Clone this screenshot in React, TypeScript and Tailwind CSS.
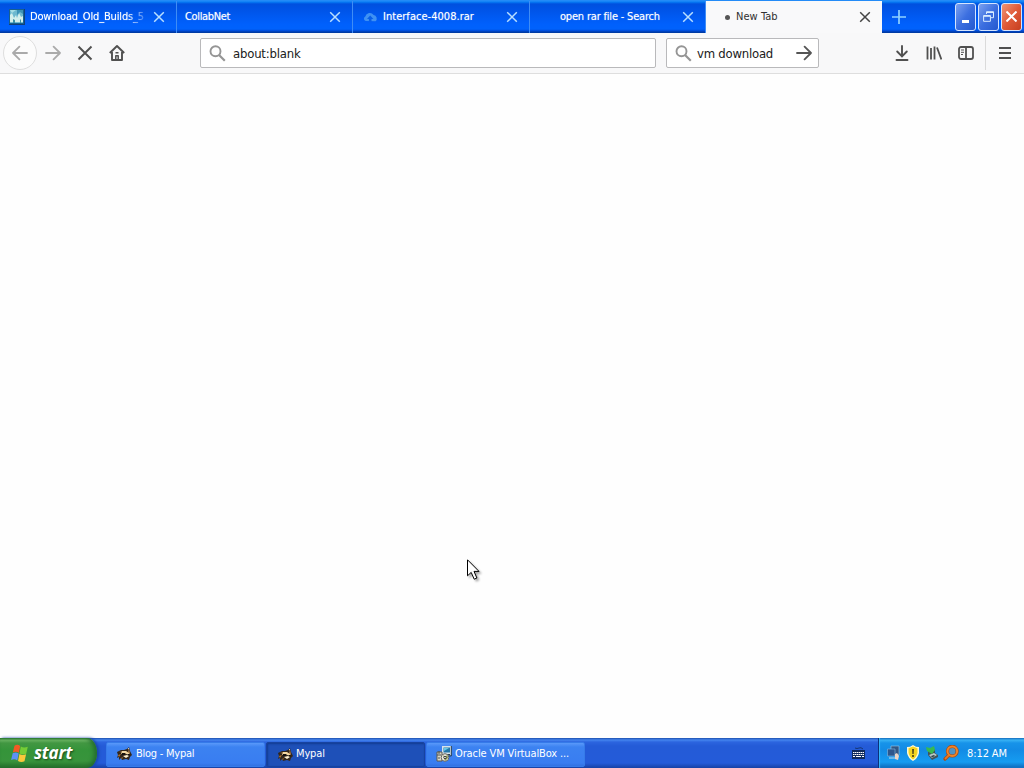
import type { ReactNode } from 'react';
import clsx from 'clsx';

interface IconProps {
  className?: string;
}

function CloseIcon({ className }: IconProps) {
  return (
    <svg className={clsx('size-3 shrink-0', className)} viewBox="0 0 12 12" fill="none" stroke="currentColor" strokeWidth="1.5">
      <path d="M1.2 1.2l9.6 9.6M10.8 1.2l-9.6 9.6" />
    </svg>
  );
}

function SearchIcon({ className }: IconProps) {
  return (
    <svg className={clsx('size-[17px] shrink-0 text-[#959595]', className)} viewBox="0 0 17 17" fill="none" stroke="currentColor">
      <circle cx="6.5" cy="6.3" r="5" strokeWidth="1.9" />
      <path d="M10 10l5.8 5.8" strokeWidth="2.2" />
    </svg>
  );
}

function ArrowIcon({ className }: IconProps) {
  return (
    <svg className={clsx('size-4 shrink-0', className)} viewBox="0 0 16 16" fill="none" stroke="currentColor" strokeWidth="1.8" strokeLinecap="round" strokeLinejoin="round">
      <path d="M1 8h14M8.6 1.6L15 8l-6.4 6.4" />
    </svg>
  );
}

function MountainIcon() {
  return (
    <svg className="size-4 shrink-0" viewBox="0 0 16 16">
      <rect width="16" height="16" fill="#17608f" />
      <path d="M1 1h13v13H1z" fill="#6db9cf" />
      <path d="M1 6l2-2 2 5 2-3 1 3 2-5 2 4 2-1v6H1z" fill="#d3efec" />
      <path d="M4 14V10l2 1v3zM11 14v-4l1 1v3z" fill="#3c91a6" />
      <path d="M1 1h6L3 4z" fill="#a5dde4" />
      <path d="M8 1h6v4l-3-2-3 3z" fill="#3c92b6" />
      <path d="M0 15h16v1H0zM15 0h1v16h-1z" fill="#103f78" />
    </svg>
  );
}

function CloudIcon() {
  return (
    <svg className="h-3 w-[15px] shrink-0" viewBox="0 0 15 12">
      <path d="M2.8 10A2.4 2.4 0 0 1 2.3 5.5 4.6 4.6 0 0 1 10.6 4a3.6 3.6 0 0 1 2 6.2z" fill="#3f91f3" />
      <path d="M7.2 4.5L10.4 8H8.5v3H5.9V8H4z" fill="#075fe9" />
    </svg>
  );
}

interface TabProps {
  title: string;
  icon?: ReactNode;
  active?: boolean;
  className?: string;
  textClassName?: string;
}

function Tab({ title, icon, active, className, textClassName }: TabProps) {
  return (
    <div
      className={clsx(
        'flex h-full shrink-0 items-center pr-[11px]',
        active ? 'bg-[#f9f9fa] text-[#303030]' : 'border-r border-[#3f8df5] text-white',
        className,
      )}
    >
      {icon}
      <span className={clsx('flex-1 overflow-hidden pt-px whitespace-nowrap', !active && '[text-shadow:0_0_1px_#fff8]', textClassName)}>
        {title}
      </span>
      <CloseIcon className={active ? 'text-[#444]' : 'text-[#b8dfff]'} />
    </div>
  );
}

function WindowButton({ children, close }: { children: ReactNode; close?: boolean }) {
  return (
    <button
      className={clsx(
        'flex h-7 w-[21px] items-center justify-center rounded-[3px] border border-[#d5e5ff]',
        close
          ? 'bg-linear-to-br from-[#ee9476] via-[#e05a38] to-[#c63f20]'
          : 'bg-linear-to-br from-[#7ba0ef] via-[#3c6fe0] to-[#2458cf]',
      )}
    >
      {children}
    </button>
  );
}

function TabBar() {
  return (
    <div className="flex h-[33px] bg-[linear-gradient(180deg,#238bf7_0,#238bf7_1px,#067cf5_2px,#0050df_4px,#0054e8_10px,#0060fc_24px,#0062fc_29px,#0049d5_31px,#003ba5_32px)] text-[11px]">
      <div className="flex pt-px">
        <Tab title="Download_Old_Builds_5" icon={<MountainIcon />} className="w-[177px] gap-[5px] pl-[9px]" textClassName="mr-[4px] tracking-[-0.15px] [mask-image:linear-gradient(90deg,#000_84%,#0004)]" />
        <Tab title="CollabNet" className="w-[176px] pl-[8px]" textClassName="tracking-[-0.35px]" />
        <Tab title="Interface-4008.rar" icon={<CloudIcon />} className="w-[177px] gap-[5px] pl-[10px]" textClassName="tracking-[0.03px]" />
        <Tab title="open rar file - Search" className="w-[176px] pl-[30px]" textClassName="tracking-[-0.19px]" />
        <Tab title="New Tab" active icon={<span className="size-[5px] shrink-0 rounded-full bg-[#555]" />} className="w-[176px] gap-[6px] pl-[19px]" textClassName="tracking-[0.05px]" />
      </div>
      <div className="flex flex-1 items-center justify-between pr-[2px] pl-[10px]">
        <svg className="size-[14px] text-[#8fd2ff]" viewBox="0 0 14 14" fill="none" stroke="currentColor" strokeWidth="1.7">
          <path d="M7 0v14M0 7h14" />
        </svg>
        <div className="flex gap-[2px]">
          <WindowButton>
            <svg className="size-3" viewBox="0 0 12 12"><path d="M2 9h7v3H2z" fill="#fff" /></svg>
          </WindowButton>
          <WindowButton>
            <svg className="size-[11px]" viewBox="0 0 11 11" fill="none" stroke="#d9ecff">
              <path d="M3.5 3V.7h7v6H8M3.5 1.5h7" />
              <path d="M.6 4.5h6.8v5.8H.6zM.6 5.3h6.8" />
            </svg>
          </WindowButton>
          <WindowButton close>
            <svg className="size-[11px]" viewBox="0 0 11 11" stroke="#fff" strokeWidth="2">
              <path d="M.5.5l10 10M10.5.5l-10 10" />
            </svg>
          </WindowButton>
        </div>
      </div>
    </div>
  );
}

function Toolbar() {
  return (
    <div className="flex h-[41px] items-center border-b border-[#dedede] bg-[#f8f8f9] text-[#505050]">
      <button className="ml-[3px] flex size-[34px] items-center justify-center rounded-full border border-[#dedede] bg-[#fcfcfc]">
        <ArrowIcon className="rotate-180 text-[#aaa]" />
      </button>
      <ArrowIcon className="ml-[8px] text-[#aaa]" />
      <svg className="ml-[16px] size-4" viewBox="0 0 16 16" fill="none" stroke="currentColor" strokeWidth="1.9">
        <path d="M1.5 1.5l13 13M14.5 1.5l-13 13" />
      </svg>
      <svg className="ml-[16px] size-4" viewBox="0 0 16 16" fill="none" stroke="currentColor" strokeWidth="1.9" strokeLinejoin="round">
        <path d="M.8 8L8 1l7.2 7M3 7v8h10V7" />
        <path d="M6.8 15v-4.2h2.4V15M6.5 7.7h3" strokeWidth="1.5" />
      </svg>
      <div className="ml-[75px] flex h-[30px] w-[456px] items-center gap-[7px] rounded-[2px] border border-[#b9b9bb] bg-white pl-[8px] text-[13px] text-[#202020]">
        <SearchIcon />
        <span className="pt-px tracking-[-0.2px]">about:blank</span>
      </div>
      <div className="ml-[10px] flex h-[30px] w-[153px] items-center rounded-[2px] border border-[#b9b9bb] bg-white pr-[6px] pl-[8px] text-[13px] text-[#202020]">
        <SearchIcon />
        <span className="ml-[5px] flex-1 pt-px tracking-[-0.23px] whitespace-nowrap">vm download</span>
        <ArrowIcon className="text-[#555]" />
      </div>
      <div className="ml-auto flex h-full items-center">
        <svg className="size-4" viewBox="0 0 16 16" fill="none" stroke="currentColor" strokeWidth="1.9" strokeLinecap="round">
          <path d="M8 1v10M3.2 6.5L8 11.3l4.8-4.8M2.5 15h11" />
        </svg>
        <svg className="ml-[16px] size-4" viewBox="0 0 16 16" fill="none" stroke="currentColor" strokeWidth="1.8">
          <path d="M1.5 1.5v13M5 3v11.5M8.5 1.5v13M11 2.5l4.4 12" />
        </svg>
        <svg className="ml-[16px] size-4" viewBox="0 0 16 16" fill="none" stroke="currentColor" strokeWidth="1.8">
          <rect x="1" y="2" width="14" height="12" rx="2" />
          <path d="M8 2v12" />
          <path d="M3 5h3M3 7.3h3M3 9.5h2" strokeWidth="1" />
        </svg>
        <div className="ml-[11px] h-[34px] w-px bg-[#dadada]" />
        <svg className="mr-[13px] ml-[13px] h-4 w-[12px]" viewBox="0 0 12 16" fill="none" stroke="currentColor" strokeWidth="1.8">
          <path d="M0 3h12M0 8h12M0 13h12" />
        </svg>
      </div>
    </div>
  );
}

function WindowsFlag() {
  return (
    <svg className="h-[19px] w-[18px]" viewBox="0 0 18 17" preserveAspectRatio="none">
      <path d="M3.5 1.5q3-1.6 5.7.2L7.9 7.9Q5 6.3 1.8 7.6z" fill="#f25a24" />
      <path d="M9.8 2.3q3.2 1.6 7 .1L15.2 8.7q-3.2 1.5-6.7-.2z" fill="#75cc36" />
      <path d="M1.7 8.2q3.2-1.5 6 .2l-1.4 6.3Q3.6 12.9.1 14.3z" fill="#5d91f5" />
      <path d="M8.4 9q3.2 1.7 6.7.2l-1.6 6.3q-3.3 1.5-6.5-.3z" fill="#fac83b" />
    </svg>
  );
}

function MypalIcon() {
  return (
    <svg className="h-[14px] w-[15px] shrink-0" viewBox="0 0 15 14">
      <path d="M0 5l4-2 3 0 3-1 2-2 1 4 2 4-2 2-1 3-3-1-4 1-1-2-2 2 0-3-2 1 1-3z" fill="#33261b" />
      <path d="M2 5l4-1 5 1 1-3 1 4-2 1-4-1z" fill="#a87a48" />
      <path d="M5 4l4 0 4 3-2 1-3-2-4 1z" fill="#f3d8a4" />
      <path d="M5 6l3 0 0 2-3 0zM10 7l3 0-1 2z" fill="#15110e" />
      <path d="M11 1l1 0 0 2zM6 9l4-1 2 1-3 2z" fill="#fff0cf" />
      <path d="M1 8l3-1-2 3zM4 11l2-1-1 2z" fill="#b6782f" />
    </svg>
  );
}

function InstallerIcon() {
  return (
    <svg className="size-4 shrink-0" viewBox="0 0 16 16">
      <path d="M6 0h9v9H6z" fill="#d6e3e9" />
      <path d="M7.5 1.5H14v5H7.5z" fill="#2477aa" />
      <path d="M8 2h5l-5 3z" fill="#66c9e8" />
      <path d="M15.3 0v10H8M7 8.5h7" fill="none" stroke="#31414a" />
      <path d="M1 6h5v9H1z" fill="#dcd8c8" stroke="#5c5b50" />
      <path d="M3 5v3M1 9h4M2 12h2" stroke="#4b5354" />
      <circle cx="9" cy="11.5" r="3.8" fill="#eeeddf" stroke="#666" />
      <path d="M7 9l2 1.5L11.5 9l.5 3-3 3z" fill="#8a9a55" />
      <circle cx="9" cy="11.5" r="1.2" fill="#fff" stroke="#333" />
    </svg>
  );
}

interface TaskProps {
  title: string;
  icon: ReactNode;
  active?: boolean;
  className?: string;
}

function TaskButton({ title, icon, active, className }: TaskProps) {
  return (
    <button
      className={clsx(
        'flex h-[25px] shrink-0 items-center rounded-[2px] border text-[11px] whitespace-nowrap text-white',
        active
          ? 'border-[#1743a0] bg-[#1e50b8] shadow-[inset_1px_1px_2px_#123b91]'
          : 'border-[#367be9] bg-[linear-gradient(180deg,#5a99fa_0,#3c82f1_4px,#397df1_20px,#2e6ad9_25px)]',
        className,
      )}
    >
      {icon}
      <span>{title}</span>
    </button>
  );
}

function TrayIcons() {
  return (
    <div className="flex items-center gap-[3px]">
      <svg className="size-4" viewBox="0 0 16 16">
        <path d="M5 1h8v9H5z" fill="#315785" stroke="#9dc9e8" strokeWidth=".6" />
        <path d="M1.5 4h7.5v7H1.5z" fill="#2d568c" stroke="#87b8df" strokeWidth=".6" />
        <path d="M3 12.5h6v1H3z" fill="#c4dceb" />
        <path d="M9 9l2-1 2 3-1 4-3-1z" fill="#ecd4c4" />
      </svg>
      <svg className="size-4" viewBox="0 0 16 16">
        <path d="M8 0l3 1.8L14 2v6q-1 5-6 8-5-3-6-8V2l3-.2z" fill="#fff8d0" />
        <path d="M8 1.5l4.5 1.7v4.6Q12 11.5 8 14.5 4 11.5 3.5 7.8V3.2z" fill="#f5d421" />
        <path d="M7.2 4h1.7l-.3 5H7.4zM7.2 10h1.6v2H7.2z" fill="#443b15" />
      </svg>
      <svg className="size-4" viewBox="0 0 16 16">
        <path d="M4 6l7-2 0 4 3 2v2l-6 3-4-5z" fill="#42535a" />
        <path d="M5 10l5-2 3 2-5 3z" fill="#b9c9c7" />
        <path d="M2 2l4 1 4-2 1 4-3 4-5-3z" fill="#38b950" />
        <path d="M7 11l3-1 1 1-3 1.5z" fill="#314048" />
      </svg>
      <svg className="size-4" viewBox="0 0 16 16" fill="none">
        <path d="M6 10l-4 4" stroke="#a94914" strokeWidth="3.2" strokeLinecap="round" />
        <circle cx="9.3" cy="6.2" r="4.8" fill="#4f93c4" stroke="#a94a12" strokeWidth="3.2" />
        <circle cx="9.3" cy="6.2" r="4.8" stroke="#ee8429" strokeWidth="2" />
        <path d="M6 10l-4 4" stroke="#e77822" strokeWidth="1.8" />
      </svg>
    </div>
  );
}

function Taskbar() {
  return (
    <div className="flex h-[30px] bg-[linear-gradient(180deg,#1c4fad_0,#4484ee_2px,#2c65df_4px,#245bd7_8px,#245bd9_25px,#1741a5_30px)]">
      <button className="flex h-full w-[97px] items-center gap-[5px] rounded-r-[12px_18px] bg-[linear-gradient(180deg,#287b2c_0,#70ba67_2px,#429742_5px,#35943a_12px,#38943c_23px,#246f2b_30px)] pl-[11px] shadow-[inset_-3px_0_4px_#246d2e,2px_0_3px_#1946a8]">
        <WindowsFlag />
        <span className="-mt-px text-[17px] font-bold tracking-[-0.2px] text-white italic [font-family:'Open_Sans',sans-serif] [text-shadow:1px_1px_2px_#174719]">start</span>
      </button>
      <div className="ml-[9px] flex items-center gap-px pt-[2px]">
        <TaskButton title="Blog - Mypal" icon={<MypalIcon />} className="w-[159px] gap-[4px] pl-[10px] tracking-[-0.25px]" />
        <TaskButton title="Mypal" icon={<MypalIcon />} active className="w-[159px] gap-[3px] pt-px pl-[11px] tracking-[-0.15px]" />
        <TaskButton title="Oracle VM VirtualBox ..." icon={<InstallerIcon />} className="w-[159px] gap-[3px] pl-[9px] tracking-[-0.12px]" />
      </div>
      <svg className="mt-[8px] mr-[13px] ml-auto h-[14px] w-[13px]" viewBox="0 0 13 14" fill="none">
        <path d="M3 2q2 1 4 0 2-1 4 1" stroke="#153675" />
        <path d="M0 4h13v9H0z" fill="#102a5c" />
        <path d="M1 6.5h11M1 8.5h11" stroke="#fff" strokeDasharray="1.5 .5" />
        <path d="M1 10.5h2M4 10.5h5M10 10.5h2" stroke="#fff" />
      </svg>
      <div className="flex w-[146px] items-center border-l border-[#0b327b] bg-[linear-gradient(180deg,#1162b4_0,#38b2f4_2px,#1793e9_5px,#128be5_12px,#169cf1_24px,#0e67b8_30px)] pl-[7px] shadow-[inset_1px_0_1px_#36baff]">
        <TrayIcons />
        <span className="ml-[8px] pt-[2px] text-[11px] tracking-[-0.1px] whitespace-nowrap text-white">8:12 AM</span>
      </div>
    </div>
  );
}

export default function App() {
  return (
    <div className="relative flex h-screen w-full flex-col overflow-hidden bg-white font-['DejaVu_Sans_Condensed','DejaVu_Sans',sans-serif]">
      <TabBar />
      <Toolbar />
      <main className="flex-1 bg-[#fefefe]" />
      <Taskbar />
      <svg className="absolute top-[559px] left-[467px] h-[23px] w-[16px] drop-shadow-[2px_2px_1px_#0005]" viewBox="0 0 16 23">
        <path d="M.5.8v16l3.7-3.4 3 6.8 2.7-1.2L7 12.4h5z" fill="#fff" stroke="#000" />
      </svg>
    </div>
  );
}
